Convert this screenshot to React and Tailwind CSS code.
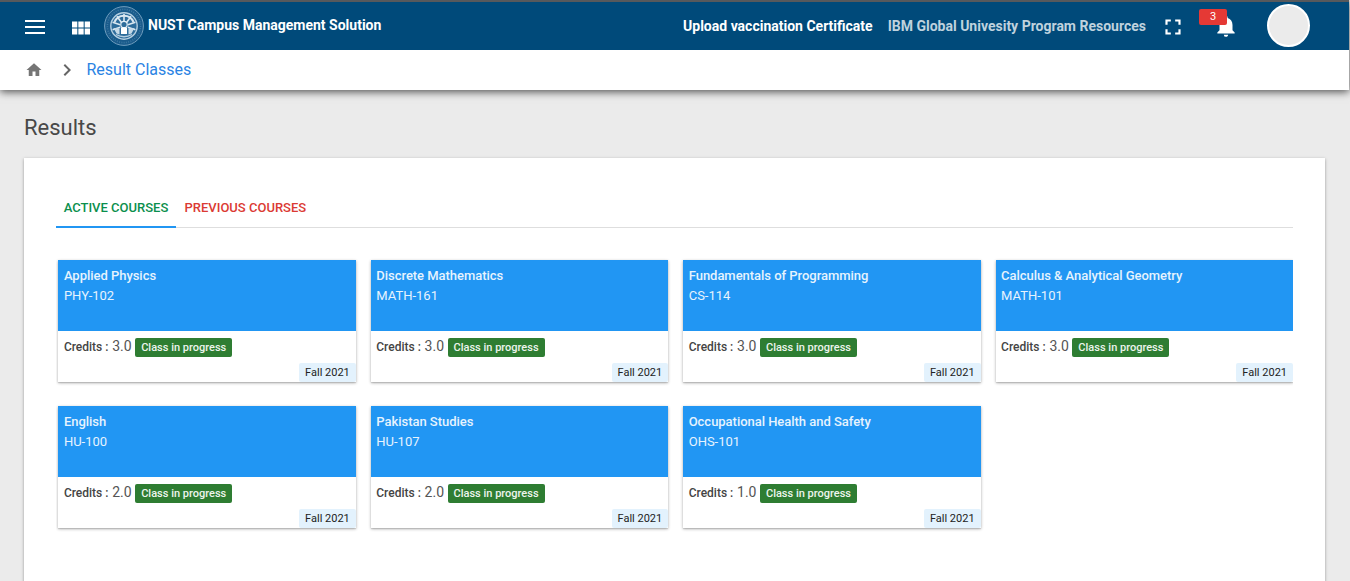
import React from "react";
import { MdViewModule, MdHome, MdFullscreen, MdNotifications, MdChevronRight } from "react-icons/md";

const COURSES = [
  { name: "Applied Physics", code: "PHY-102", credits: "3.0" },
  { name: "Discrete Mathematics", code: "MATH-161", credits: "3.0" },
  { name: "Fundamentals of Programming", code: "CS-114", credits: "3.0" },
  { name: "Calculus & Analytical Geometry", code: "MATH-101", credits: "3.0" },
  { name: "English", code: "HU-100", credits: "2.0" },
  { name: "Pakistan Studies", code: "HU-107", credits: "2.0" },
  { name: "Occupational Health and Safety", code: "OHS-101", credits: "1.0" },
];

const SPOKES = [0, 36, 72, 108, 252, 288, 324];

function Crest() {
  return (
    <svg className="ml-[11px] size-10 shrink-0" viewBox="0 0 40 40" fill="none">
      <circle cx="20" cy="20" r="19.4" fill="#1a5b8b" stroke="#6f9dbd" strokeWidth="1" />
      <circle cx="20" cy="20" r="16.6" stroke="#3b77a1" strokeWidth="1.6" strokeDasharray="1 1.3" />
      <circle cx="20" cy="20" r="13.2" fill="#2d6c9b" stroke="#b5cfe1" strokeWidth="1.4" />
      <path d="M10.5 16a10.3 10.3 0 0 1 19 0" stroke="#dce9f2" strokeWidth="2" />
      {SPOKES.map((a) => (
        <path key={a} d="M20 16V8" stroke="#dce9f2" strokeWidth="1.6" transform={`rotate(${a} 20 20)`} />
      ))}
      <circle cx="20" cy="18.5" r="3.2" fill="#2d6c9b" stroke="#e3eef6" strokeWidth="1.2" />
      <path d="M9.5 22l6 .5v6l-3-1zM30.5 22l-6 .5v6l3-1z" fill="#c5d9e7" />
      <path d="M12 28.5q8 4.500 16 0" stroke="#b5cfe1" strokeWidth="1.3" />
      <path d="M17 21.500h6v6.500h-6z" fill="#fff" />
    </svg>
  );
}

function TopBar() {
  return (
    <header className="flex h-[50px] items-center border-t-2 border-[#57595c] bg-[#004a7a] text-white">
      <button className="ml-[25px] flex w-5 flex-col gap-1 pt-[2px]" aria-label="Menu">
        <span className="h-[2px] w-5 bg-white" />
        <span className="h-[2px] w-5 bg-white" />
        <span className="h-[2px] w-5 bg-white" />
      </button>
      <MdViewModule className="mt-[3px] ml-[24px] h-[22px] w-6" preserveAspectRatio="none" />
      <Crest />
      <h1 className="ml-[4px] pb-[2px] text-[14px] leading-5 font-bold whitespace-nowrap">NUST Campus Management Solution</h1>
      <nav className="ml-auto flex text-[14px] leading-5 font-bold whitespace-nowrap">
        <a>Upload vaccination Certificate</a>
        <a className="ml-[15px] text-[#bfd2de]">IBM Global Univesity Program Resources</a>
      </nav>
      <MdFullscreen className="mt-px ml-[14px] size-[26px]" />
      <div className="relative ml-[27px] size-[27px]">
        <MdNotifications className="size-[26px]" />
        <span className="absolute top-[-4px] left-[-14px] h-4 w-7 rounded-[2px] bg-[#e53935] text-center text-[11px] leading-[15px]">3</span>
      </div>
      <div className="mr-[39px] mb-[2px] ml-[27px] size-[43px] rounded-full border-2 border-white bg-[#ebebeb]" />
    </header>
  );
}

function CourseCard({ name, code, credits }) {
  return (
    <article className="flex h-[122px] flex-col bg-white shadow-[0_1px_3px_rgba(0,0,0,0.3),0_1px_1px_rgba(0,0,0,0.1)]">
      <div className="h-[71px] bg-[#2196f3] px-[5.5px] pt-[6px] text-[13px] leading-5 text-[#e6f3fe]">
        <h3 className="font-medium tracking-[-0.03px]">{name}</h3>
        <p>{code}</p>
      </div>
      <div className="flex h-8 items-center px-[5.5px]">
        <span className="text-[12px] font-medium text-[#444]">Credits :</span>
        <span className="ml-[3.8px] pb-px text-[14px] text-[#555]">{credits}</span>
        <span className="ml-[3.5px] h-[19px] rounded-[2px] bg-[#2e7d32] px-[6px] text-[11px] leading-[19px] font-medium text-[#edf5ed]">
          Class in progress
        </span>
      </div>
      <span className="h-[19px] self-end rounded-[2px] bg-[#e3f2fd] px-[6px] text-[11px] leading-[19px] text-[#222]">Fall 2021</span>
    </article>
  );
}

export default function App() {
  return (
    <div className="h-[581px] overflow-hidden bg-[#ebebeb] pr-px font-[Roboto,sans-serif]">
      <div className="shadow-[0_2px_8px_rgba(0,0,0,0.65)]">
        <TopBar />
        <div className="flex h-10 items-center bg-white">
          <MdHome className="ml-[25px] size-[18px] text-[#757575]" />
          <MdChevronRight className="ml-[11.5px] size-6 text-[#666]" />
          <span className="ml-[8px] text-[16px] text-[#2a83e3]">Result Classes</span>
        </div>
      </div>
      <main className="px-6">
        <h2 className="pt-[22px] text-[22px] leading-8 text-[#484848]">Results</h2>
        <section className="mt-[14px] h-[460px] bg-white px-8 pt-[30px] shadow-[0_1px_3px_rgba(0,0,0,0.35)]">
          <div className="flex h-10 border-b border-[#dedede] text-[13px] leading-10 font-medium">
            <span className="h-10 w-[120px] border-b-2 border-[#2196f3] text-center text-[#0b8f4d]">ACTIVE COURSES</span>
            <span className="ml-[8.5px] text-[#db3a33]">PREVIOUS COURSES</span>
          </div>
          <div className="overflow-hidden pt-8 pb-2 pl-[2.4px]">
            <div className="grid grid-cols-4 gap-x-[15px] gap-y-6">
              {COURSES.map((c) => (
                <CourseCard key={c.code} {...c} />
              ))}
            </div>
          </div>
        </section>
      </main>
    </div>
  );
}
